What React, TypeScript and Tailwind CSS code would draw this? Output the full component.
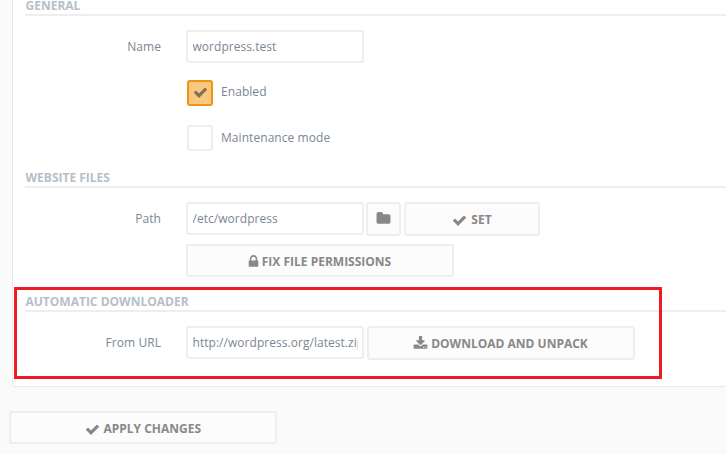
import React from "react";

const paths = {
  check:
    "M1671 566q0 40-28 68l-724 724-136 136q-28 28-68 28t-68-28l-136-136-362-362q-28-28-28-68t28-68l136-136q28-28 68-28t68 28l294 295 656-657q28-28 68-28t68 28l136 136q28 28 28 68z",
  lock: "M640 768h512v-192q0-106-75-181t-181-75-181 75-75 181v192zm832 96v576q0 40-28 68t-68 28h-960q-40 0-68-28t-28-68v-576q0-40 28-68t68-28h32v-192q0-184 132-316t316-132 316 132 132 316v192h32q40 0 68 28t28 68z",
  folder:
    "M1728 608v704q0 92-66 158t-158 66h-1216q-92 0-158-66t-66-158v-960q0-92 66-158t158-66h320q92 0 158 66t66 158v32h672q92 0 158 66t66 158z",
  download:
    "M1344 1344q0-26-19-45t-45-19-45 19-19 45 19 45 45 19 45-19 19-45zm256 0q0-26-19-45t-45-19-45 19-19 45 19 45 45 19 45-19 19-45zm128-224v320q0 40-28 68t-68 28h-1472q-40 0-68-28t-28-68v-320q0-40 28-68t68-28h465l135 136q58 56 136 56t136-56l136-136h464q40 0 68 28t28 68zm-325-569q17 41-14 70l-448 448q-18 19-45 19t-45-19l-448-448q-31-29-14-70 17-39 59-39h256v-448q0-26 19-45t45-19h256q26 0 45 19t19 45v448h256q42 0 59 39z",
};

function Icon({ name, className = "" }: { name: keyof typeof paths; className?: string }) {
  return (
    <svg viewBox="0 0 1792 1792" fill="currentColor" className={`size-[15px] shrink-0 ${className}`}>
      <path d={paths[name]} />
    </svg>
  );
}

function Heading({ className, children }: { className: string; children: React.ReactNode }) {
  return (
    <h2 className={`border-b-2 border-[#eeeeee] pl-[0.5px] text-[12px] font-bold tracking-normal text-[#b5bfc9] ${className}`}>
      {children}
    </h2>
  );
}

function Label({ children }: { children: React.ReactNode }) {
  return <label className="mr-[25px] w-[136px] shrink-0 text-right leading-[33px]">{children}</label>;
}

function Field({ value }: { value: string }) {
  return (
    <input
      readOnly
      value={value}
      className="h-[33px] w-[178px] shrink-0 rounded-[3px] border-2 border-[#eeeeee] bg-white pr-[4px] pb-px pl-[4.5px] text-[12px] tracking-[0.04px] text-[#7b8794] outline-none"
    />
  );
}

function Button({ className, children }: { className: string; children: React.ReactNode }) {
  return (
    <button
      className={`flex shrink-0 items-center justify-center rounded-[3px] border-2 border-[#eeeeee] bg-[#fcfcfc] text-[12px] font-bold tracking-normal text-[#888888] ${className}`}
    >
      {children}
    </button>
  );
}

export default function App() {
  return (
    <div className="relative h-[454px] w-[726px] overflow-hidden bg-[#fafafa] font-['Open_Sans','Noto_Sans',sans-serif] text-[12px] tracking-[0.06px] text-[#7b8794]">
      <main className="ml-3 h-[387px] w-[730px] rounded-bl-[4px] border-b border-l border-[#e9e9e9] bg-white pl-3">
        <Heading className="h-[16px] leading-[11px]">GENERAL</Heading>
        <div className="mt-[14px] flex">
          <Label>Name</Label>
          <Field value="wordpress.test" />
        </div>
        <div className="mt-[17px] ml-[162px] flex h-[26px] gap-2">
          <span className="flex size-[26px] items-center justify-center rounded-[3px] border-2 border-[#ee9410] bg-[#f9c880] text-[#85704f]">
            <Icon name="check" className="-mt-[2px]" />
          </span>
          <span className="leading-[23px]">Enabled</span>
        </div>
        <div className="mt-[19px] ml-[162px] flex h-[26px] gap-2">
          <span className="size-[26px] rounded-[3px] border-2 border-[#eeeeee] bg-white" />
          <span className="leading-[25px]">Maintenance mode</span>
        </div>
        <Heading className="mt-[18px] h-[19px] leading-[17px]">WEBSITE FILES</Heading>
        <div className="mt-[14px] flex h-[34px]">
          <Label>Path</Label>
          <Field value="/etc/wordpress" />
          <Button className="ml-0.5 h-[34px] w-[35px]">
            <Icon name="folder" className="-mt-px" />
          </Button>
          <Button className="ml-[3px] h-[34px] w-[136px] gap-1 pt-px">
            <Icon name="check" className="mt-px" />
            SET
          </Button>
        </div>
        <div className="mt-2 ml-[161px] flex">
          <Button className="h-[33px] w-[268px] gap-px pt-0.5 pr-[3px]">
            <Icon name="lock" />
            FIX FILE PERMISSIONS
          </Button>
        </div>
        <Heading className="mt-4 h-[19px] leading-[17px]">AUTOMATIC DOWNLOADER</Heading>
        <div className="mt-[14px] flex h-[34px]">
          <Label>From URL</Label>
          <Field value="http://wordpress.org/latest.zip" />
          <Button className="ml-[3px] h-[34px] w-[268px] gap-[3px] pt-px pr-px">
            <Icon name="download" />
            DOWNLOAD AND UNPACK
          </Button>
        </div>
      </main>
      <div className="mt-6 ml-[9px] flex">
        <Button className="h-[33px] w-[268px] gap-[3.5px] pt-0.5">
          <Icon name="check" className="mt-px" />
          APPLY CHANGES
        </Button>
      </div>
      <div className="pointer-events-none absolute top-[287px] left-[14px] h-[92px] w-[648px] border-3 border-[#ed1c24]" />
    </div>
  );
}
